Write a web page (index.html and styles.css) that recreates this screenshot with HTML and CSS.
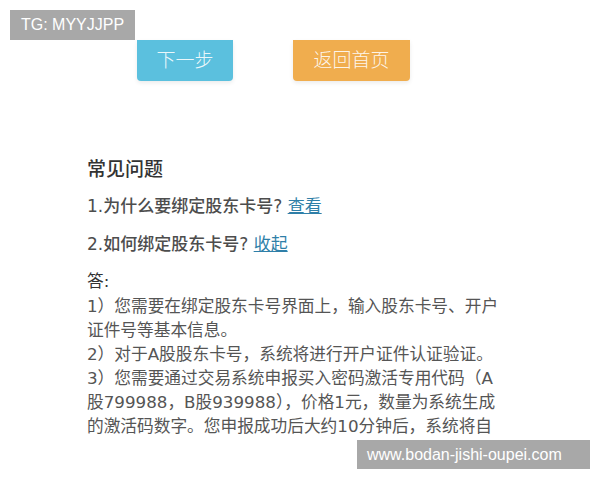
FILE: index.html
```html
<!DOCTYPE html>
<html>
<head>
    <meta charset="utf-8">
    <title>常见问题</title>
    <link rel="stylesheet" href="styles.css">
</head>
<body>
    <div class="tag-badge">TG: MYYJJPP</div>
    <div class="page">
        <div class="actions">
            <a class="btn btn-next" href="#">下一步</a>
            <a class="btn btn-home" href="#">返回首页</a>
        </div>
        <div class="faq">
            <h2 class="faq-title">常见问题</h2>
            <p class="faq-question">1.为什么要绑定股东卡号? <a href="#">查看</a></p>
            <p class="faq-question">2.如何绑定股东卡号? <a href="#">收起</a></p>
            <div class="faq-answer">
                <p>答:</p>
                <p>1）您需要在绑定股东卡号界面上，输入股东卡号、开户<br>证件号等基本信息。</p>
                <p>2）对于A股股东卡号，系统将进行开户证件认证验证。</p>
                <p>3）您需要通过交易系统申报买入密码激活专用代码（A<br>股799988，B股939988），价格1元，数量为系统生成<br>的激活码数字。您申报成功后大约10分钟后，系统将自</p>
            </div>
        </div>
    </div>
    <div class="site-badge">www.bodan-jishi-oupei.com</div>
</body>
</html>
```

FILE: styles.css
```css
body {
    margin: 0;
    background-color: #ffffff;
    font-family: "Noto Sans CJK SC", "Liberation Sans", sans-serif;
    color: #555555;
    height: 480px;
    overflow: hidden;
}
.tag-badge, .site-badge {
    position: absolute;
    box-sizing: border-box;
    background-color: #a8a8a8;
    color: #ffffff;
    font-family: "Liberation Sans", sans-serif;
    font-size: 16px;
    white-space: nowrap;
}
.tag-badge {
    top: 10px;
    left: 10px;
    width: 125px;
    height: 30px;
    line-height: 30px;
    padding-left: 11px;
}
.site-badge {
    top: 440px;
    left: 357px;
    width: 233px;
    height: 29px;
    line-height: 29px;
    padding-left: 10px;
}
.actions {
    display: flex;
    gap: 60px;
    padding: 40px 0 0 137px;
}
.btn {
    display: block;
    height: 41px;
    line-height: 37px;
    text-align: center;
    font-size: 19px;
    font-weight: 300;
    color: rgba(255, 255, 255, 0.9);
    text-decoration: none;
    border-radius: 0 0 4px 4px;
    box-shadow: 0 2px 4px rgba(0, 0, 0, 0.08);
}
.btn-next {
    width: 96px;
    background-color: #5bc0de;
}
.btn-home {
    width: 117px;
    background-color: #f0ad4e;
}
.faq {
    padding: 74px 0 0 87px;
}
.faq-title {
    margin: 0;
    font-size: 19px;
    font-weight: 500;
    line-height: 26px;
    color: #333333;
}
.faq-question {
    margin: 12px 0 0;
    font-family: "DejaVu Sans", "Noto Sans CJK SC", sans-serif;
    font-size: 17px;
    font-weight: 500;
    line-height: 26px;
    color: #4d4d4d;
}
.faq-question a {
    font-weight: normal;
    color: #2f7fa8;
    text-decoration: underline;
}
.faq-answer {
    margin-top: 12px;
    font-family: "DejaVu Sans", "Noto Sans CJK SC", sans-serif;
    font-size: 16.7px;
    line-height: 24px;
    white-space: nowrap;
}
.faq-answer p {
    margin: 0;
}
.faq-answer p:first-child {
    color: #333333;
    margin-bottom: 1px;
}
```
